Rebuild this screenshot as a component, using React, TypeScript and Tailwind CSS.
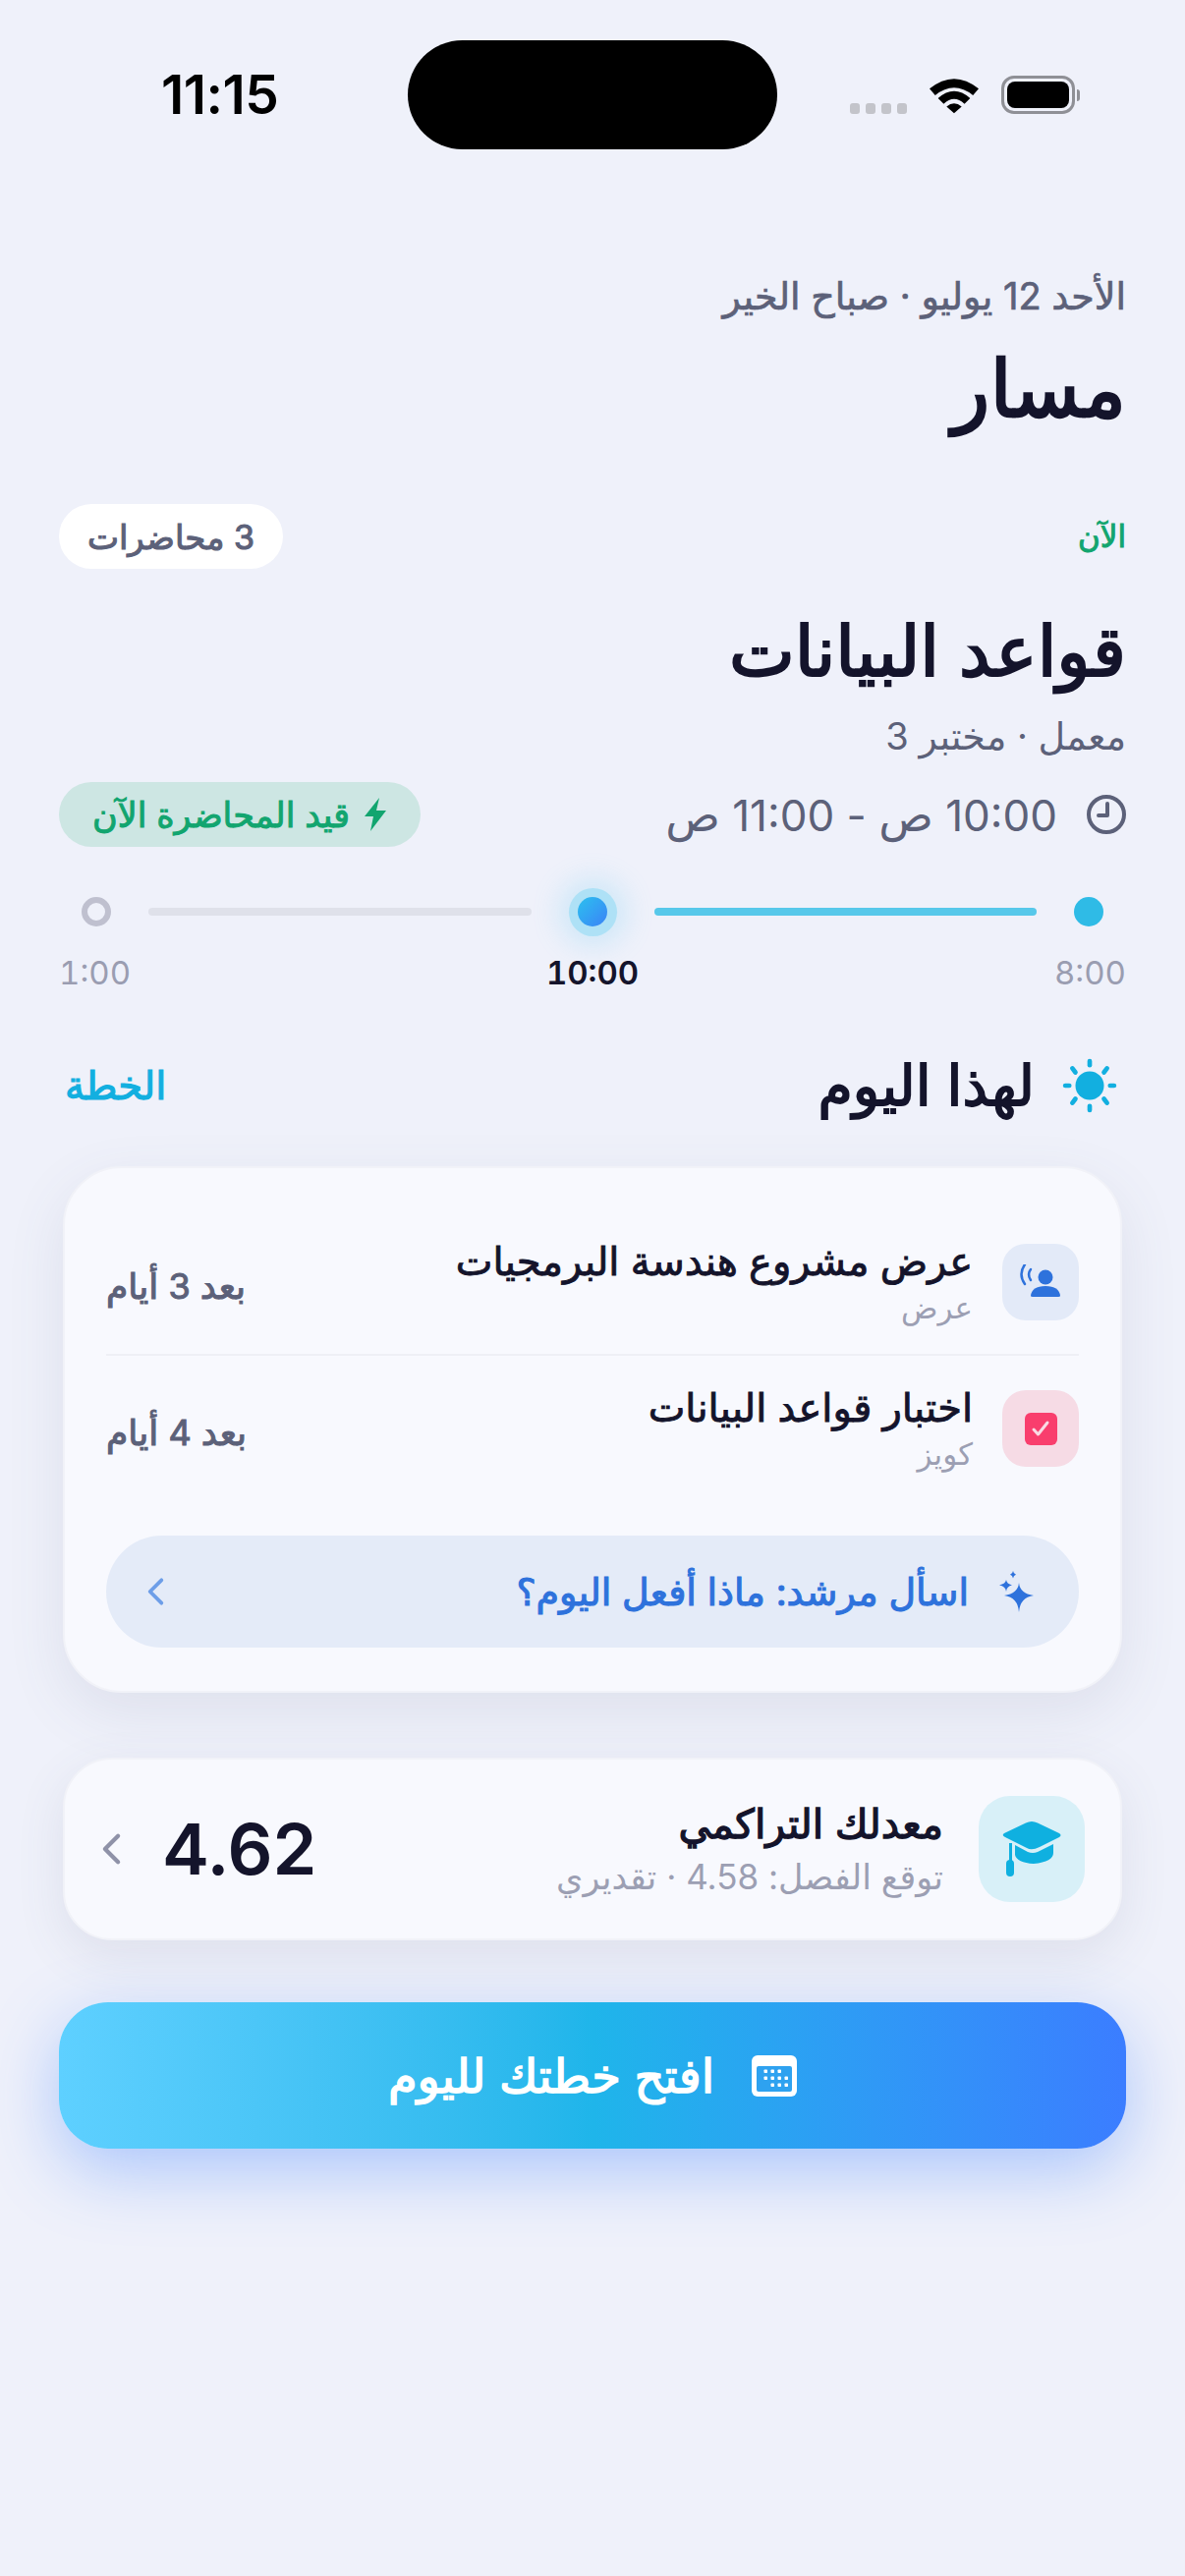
import type { ReactNode } from 'react'

function Chevron({ className }: { className: string }) {
  return (
    <svg viewBox="0 0 22 36" fill="none" stroke="currentColor" strokeWidth="4.5" strokeLinecap="round" strokeLinejoin="round" className={className}>
      <polyline points="18,4 4,18 18,32" />
    </svg>
  )
}

function StatusBar() {
  return (
    <div dir="ltr" className="flex h-[152px] items-start pt-[41px]">
      <div className="ml-[164px] flex h-[111px] w-[251px] items-center pb-[1px] font-['Inter',sans-serif] text-[55px] font-semibold leading-none tracking-[-0.5px] text-black">
        11:15
      </div>
      <div className="h-[111px] w-[376px] rounded-[56px] bg-black" />
      <div className="ml-[74px] flex h-[111px] items-center">
        <div className="mt-[27px] flex gap-[6px]">
          <span className="h-[11px] w-[10px] rounded-[3px] bg-[#c3c4ca]" />
          <span className="h-[11px] w-[10px] rounded-[3px] bg-[#c3c4ca]" />
          <span className="h-[11px] w-[10px] rounded-[3px] bg-[#c3c4ca]" />
          <span className="h-[11px] w-[10px] rounded-[3px] bg-[#c3c4ca]" />
        </div>
        <svg viewBox="0 0 52 38" className="ml-[23px] h-[38px] w-[50px]" fill="black">
          <path d="M0 12 Q26 -9 52 12 L46 19 Q26 3 6 19 Z" />
          <path d="M9 22 Q26 7 43 22 L37 28 Q26 18 15 28 Z" />
          <path d="M18 31 Q26 24 34 31 L26 38 Z" />
        </svg>
        <div className="ml-[23px] flex items-center">
          <div className="flex h-[39px] w-[75px] items-center justify-center rounded-[13px] border-[3px] border-[#8f9096]">
            <div className="h-[27px] w-[63px] rounded-[8px] bg-black" />
          </div>
          <div className="ml-[2px] h-[12px] w-[3px] rounded-r-full bg-[#8f9096]" />
        </div>
      </div>
    </div>
  )
}

function NowSection() {
  return (
    <>
      <div className="mt-[124px] h-[50px] text-[38px] leading-[50px] text-[#5c6179] [-webkit-text-stroke:0.7px]">الأحد 12 يوليو · صباح الخير</div>
      <h1 className="mt-[19px] h-[100px] text-[80px] font-normal leading-[100px] text-[#14142b] [-webkit-text-stroke:2.4px]">مسار</h1>

      <div className="mt-[68px] flex h-[66px] items-center justify-between">
        <span className="text-[31px] text-[#12a56f] [-webkit-text-stroke:1px]">الآن</span>
        <span className="flex h-[66px] w-[228px] items-center justify-center rounded-full bg-white text-[34px] text-[#5c6179] [-webkit-text-stroke:1.1px]">3 محاضرات</span>
      </div>

      <h2 className="mt-[38px] h-[90px] text-[71px] font-normal leading-[90px] text-[#14142b] [-webkit-text-stroke:2.2px]">قواعد البيانات</h2>
      <p className="mt-[17px] h-[50px] text-[38px] leading-[50px] text-[#5c6179]">معمل · مختبر 3</p>

      <div className="mt-[22px] flex h-[66px] items-center justify-between">
        <div className="flex items-center gap-[30px] text-[44px] text-[#5c6179]">
          <svg viewBox="0 0 40 40" fill="none" stroke="#5c6179" strokeWidth="4" strokeLinecap="round" strokeLinejoin="round" className="h-[40px] w-[40px]">
            <circle cx="20" cy="20" r="18" />
            <polyline points="21,9 21,21 12,21" />
          </svg>
          <span>
            10:00 <span className="text-[46px]">ص</span> - 11:00 <span className="text-[46px]">ص</span>
          </span>
        </div>
        <span className="flex h-[66px] w-[368px] items-center justify-center gap-[14px] rounded-full bg-[#cde6e3] text-[35px] text-[#12a56f] [-webkit-text-stroke:1px]">
          <svg viewBox="0 0 24 34" fill="#12a56f" className="h-[34px] w-[24px]">
            <path d="M16 0 L1 19 L10 19 L7 34 L23 13 L13 13 Z" />
          </svg>
          قيد المحاضرة الآن
        </span>
      </div>
    </>
  )
}

function Timeline() {
  return (
    <>
      <div className="mt-[41px] flex h-[50px] items-center gap-[38px] px-[23px]">
        <span className="h-[30px] w-[30px] shrink-0 rounded-full bg-[#2fbbe6]" />
        <span className="h-[8px] flex-1 rounded-full bg-[#57c8ea]" />
        <span className="flex h-[49px] w-[49px] shrink-0 items-center justify-center rounded-full bg-[#aee1f6] shadow-[0_0_28px_10px_rgba(90,200,245,0.22)]">
          <span className="h-[30px] w-[30px] rounded-full bg-gradient-to-br from-[#2cc0ee] to-[#3b82f6]" />
        </span>
        <span className="h-[8px] flex-1 rounded-full bg-[#dfe1ea]" />
        <span className="h-[30px] w-[30px] shrink-0 rounded-full border-[6px] border-[#bfc0cf]" />
      </div>
      <div className="mt-[17px] flex h-[40px] items-center justify-between text-[33px] tabular-nums leading-[40px] text-[#9a9db1]">
        <span>8:00</span>
        <span className="font-semibold text-[#14142b]">10:00</span>
        <span>1:00</span>
      </div>
    </>
  )
}

function SectionHead() {
  return (
    <div className="mt-[55px] flex h-[80px] items-center justify-between pl-[6px]">
      <div className="flex items-center gap-[28px] pr-[9px]">
        <svg viewBox="0 0 54 54" className="h-[56px] w-[56px]" fill="#12afe0" stroke="#12afe0" strokeWidth="4.5" strokeLinecap="round">
          <circle cx="27" cy="27" r="14" stroke="none" />
          <line x1="27" y1="3" x2="27" y2="7" />
          <line x1="27" y1="47" x2="27" y2="51" />
          <line x1="3" y1="27" x2="7" y2="27" />
          <line x1="47" y1="27" x2="51" y2="27" />
          <line x1="10" y1="10" x2="13" y2="14" />
          <line x1="44" y1="10" x2="41" y2="14" />
          <line x1="10" y1="44" x2="13" y2="40" />
          <line x1="44" y1="44" x2="41" y2="40" />
        </svg>
        <h3 className="text-[57px] font-normal text-[#14142b] [-webkit-text-stroke:1.8px]">لهذا اليوم</h3>
      </div>
      <span className="text-[40px] text-[#12afe0] [-webkit-text-stroke:1.2px]">الخطة</span>
    </div>
  )
}

function TaskRow({ icon, iconBg, title, kind, due }: { icon: ReactNode; iconBg: string; title: string; kind: string; due: string }) {
  return (
    <div className="flex h-[78px] items-center">
      <div className={`flex h-[78px] w-[78px] shrink-0 items-center justify-center rounded-[24px] ${iconBg}`}>{icon}</div>
      <div className="mr-[30px] flex-1">
        <div className="h-[42px] text-[40px] leading-[42px] text-[#14142b] [-webkit-text-stroke:0.9px]">{title}</div>
        <div className="mt-[10px] h-[32px] text-[31px] leading-[32px] text-[#9c9fb3]">{kind}</div>
      </div>
      <span className="mt-[8px] text-[36px] text-[#5c6179] [-webkit-text-stroke:1.1px]">{due}</span>
    </div>
  )
}

function TasksCard() {
  return (
    <div className="mx-[4px] mt-[42px] h-[536px] rounded-[60px] border-2 border-[#f1f2f8] bg-[#f8f9fe] px-[42px] pt-[77px] shadow-[0_20px_60px_rgba(80,90,130,0.11)]">
      <TaskRow
        iconBg="bg-[#e3eaf8]"
        title="عرض مشروع هندسة البرمجيات"
        kind="عرض"
        due="بعد 3 أيام"
        icon={
          <svg viewBox="0 0 44 36" className="h-[36px] w-[44px]" fill="#2e72dc">
            <circle cx="27" cy="13" r="7.500" />
            <path d="M12 32 Q13 22 27 22 Q41 22 42 32 Q42 33 40 33 L14 33 Q12 33 12 32 Z" />
            <path d="M6 0 Q-1 10 6 20" fill="none" stroke="#2e72dc" strokeWidth="2.500" strokeLinecap="round" />
            <path d="M12 5 Q8 10 12 16" fill="none" stroke="#2e72dc" strokeWidth="2.500" strokeLinecap="round" />
          </svg>
        }
      />
      <div className="mt-[34px] h-[2px] bg-[#eff0f6]" />
      <div className="mt-[35px]">
        <TaskRow
          iconBg="bg-[#f6dbe5]"
          title="اختبار قواعد البيانات"
          kind="كويز"
          due="بعد 4 أيام"
          icon={
            <span className="flex h-[33px] w-[33px] items-center justify-center rounded-[6px] bg-[#f93e6d]">
              <svg viewBox="0 0 20 18" fill="none" stroke="#f9dbe4" strokeWidth="3" strokeLinecap="round" strokeLinejoin="round" className="h-[18px] w-[20px]">
                <polyline points="3,10 7.5,15 17,3" />
              </svg>
            </span>
          }
        />
      </div>
      <div className="mt-[70px] flex h-[114px] items-center rounded-full bg-[#e4ebf8] pl-[40px] pr-[46px] text-[#2e72dc]">
        <svg viewBox="0 0 36 42" fill="#2e72dc" className="h-[42px] w-[36px] shrink-0">
          <path d="M21 12 Q22 23 36 25 Q22 27 21 42 Q20 27 6 25 Q20 23 21 12 Z" />
          <path d="M8 9 Q8.500 13 14 14.500 Q8.500 15.500 8 21 Q7.500 15.500 1 14.500 Q7.500 13 8 9 Z" />
          <path d="M15 0 Q15.500 3 18 3.800 Q15.500 4.500 15 7.500 Q14.500 4.500 12 3.800 Q14.500 3 15 0 Z" />
        </svg>
        <span className="mr-[30px] flex-1 text-[38px] [-webkit-text-stroke:1.1px]">اسأل مرشد: ماذا أفعل اليوم؟</span>
        <Chevron className="h-[30px] w-[21px] text-[#6d9ee8]" />
      </div>
    </div>
  )
}

function GpaCard() {
  return (
    <div className="mx-[4px] mt-[66px] flex h-[186px] items-center rounded-[50px] border-2 border-[#f1f2f8] bg-[#f8f9fe] pl-[36px] pr-[36px] shadow-[0_16px_50px_rgba(80,90,130,0.11)]">
      <div className="flex h-[108px] w-[108px] shrink-0 items-center justify-center rounded-[32px] bg-[#d8f0f8]">
        <svg viewBox="0 0 62 56" className="h-[56px] w-[62px]" fill="#0fb0e0">
          <path d="M31 0 Q34 0 37 1.500 L59 12 Q62 14 59 16 L39 26 Q31 30 26 27 L10 19 L4 16 Q0 14 3 12 L25 1.500 Q28 0 31 0 Z" />
          <path d="M14 24 L27 31 Q32 33 37 31 L53 23 L53 32 Q53 41 33 43 Q16 42 14 34 Z" />
          <rect x="8" y="22" width="3" height="18" />
          <rect x="5" y="39" width="8" height="17" rx="4" />
        </svg>
      </div>
      <div className="mr-[36px] flex-1">
        <div className="h-[48px] text-[41px] leading-[48px] text-[#14142b] [-webkit-text-stroke:1.3px]">معدلك التراكمي</div>
        <div className="mt-[8px] h-[44px] text-[35px] leading-[44px] text-[#9c9fb3]">توقع الفصل: 4.58 · تقديري</div>
      </div>
      <span className="font-['Inter',sans-serif] text-[72px] font-semibold leading-none text-[#14142b]">4.62</span>
      <Chevron className="mr-[40px] h-[34px] w-[23px] text-[#8f92a8]" />
    </div>
  )
}

export default function App() {
  return (
    <div dir="rtl" className="min-h-[2622px] w-[1206px] overflow-hidden bg-[#eff1fa] font-['Inter','DejaVu_Sans',sans-serif]">
      <StatusBar />
      <main className="px-[60px]">
        <NowSection />
        <Timeline />
        <SectionHead />
        <TasksCard />
        <GpaCard />
        <button className="mt-[63px] flex h-[149px] w-full items-center justify-center gap-[38px] rounded-[50px] bg-gradient-to-r from-[#5ed0ff] via-[#1fb5ea] to-[#3b7dff] text-[48px] text-white shadow-[0_22px_70px_rgba(59,125,255,0.38)] [-webkit-text-stroke:1.5px]">
          <svg viewBox="0 0 46 42" className="h-[42px] w-[46px]">
            <rect width="46" height="42" rx="6" fill="white" />
            <rect x="5" y="11" width="36" height="26" rx="2" fill="#2ea2f0" />
            {[[14, 16], [21, 16], [28, 16], [14, 23], [21, 23], [28, 23], [35, 23], [21, 30], [28, 30], [35, 30]].map(([x, y]) => (
              <rect key={`${x}-${y}`} x={x - 1.5} y={y - 1.5} width="3.500" height="3.500" rx="0.800" fill="white" />
            ))}
          </svg>
          افتح خطتك لليوم
        </button>
      </main>
    </div>
  )
}
